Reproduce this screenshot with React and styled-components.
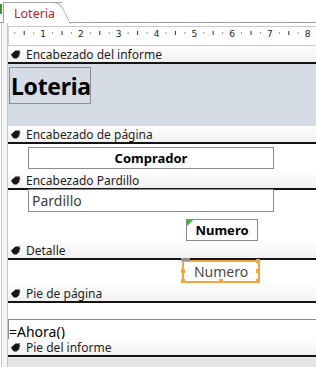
import styled, { createGlobalStyle } from "styled-components";

const GlobalStyle = createGlobalStyle`
  html, body { margin: 0; padding: 0; background: #ffffff; }
  body { font-family: "Noto Sans", "Open Sans", sans-serif; }
`;

const Page = styled.div`
  width: 316px;
  height: 367px;
  overflow: hidden;
  display: flex;
  flex-direction: column;
  background: #ffffff;
`;

const TabBar = styled.div`
  height: 22px;
  flex: none;
  display: flex;
  align-items: flex-end;
  border-bottom: 1px solid #9c9c9c;
  position: relative;
`;

const GreenStub = styled.div`
  width: 2px;
  height: 10px;
  margin-bottom: 8px;
  background: #3f9b3a;
  flex: none;
`;

const Tab = styled.div`
  position: relative;
  margin-left: 1px;
  height: 21px;
  margin-bottom: -1px;
  padding: 0 7px 0 10px;
  display: flex;
  align-items: center;
  font-size: 12.5px;
  color: #b8262d;
  background: #ffffff;
  border-left: 1px solid #a3a3a3;
  border-top: 1px solid #a3a3a3;
  box-sizing: border-box;
  z-index: 1;

  &::after {
    content: "";
    position: absolute;
    right: -9px;
    top: -1px;
    width: 14px;
    height: 21px;
    border-top: 1px solid #a3a3a3;
    border-right: 1px solid #a3a3a3;
    border-top-right-radius: 7px;
    background: #ffffff;
    transform: skewX(26deg);
    transform-origin: bottom left;
    z-index: -1;
  }
`;

const Workspace = styled.div`
  flex: 1;
  display: flex;
  min-height: 0;
`;

const Gutter = styled.div`
  flex: none;
  box-sizing: border-box;
  border-left: 1px solid #c9c9c9;
  border-right: 1px solid #c2c2c2;
  margin-left: 1px;
  width: 7px;
  background: #f4f4f4;
`;

const Designer = styled.div`
  flex: 1;
  display: flex;
  flex-direction: column;
  padding-top: 3px;
  min-width: 0;
`;

const RulerBox = styled.div`
  height: 20px;
  flex: none;
  box-sizing: border-box;
  border-top: 1px solid #c8c8c8;
  border-bottom: 1px solid #c8c8c8;
  border-left: 1px solid #d4d4d4;
`;

const Band = styled.div`
  height: 16px;
  flex: none;
  display: flex;
  align-items: center;
  gap: 5px;
  padding-left: 3px;
  font-size: 12px;
  color: #1e1e1e;
  background: linear-gradient(#fdfdfd, #f1f1f1);
  border-bottom: 2px solid #141414;
  white-space: nowrap;
`;

const Body = styled.div`
  position: relative;
  flex: none;
  height: ${(p) => p.$h}px;
  background: ${(p) => p.$bg || "#ffffff"};
`;

const Outside = styled.div`
  flex: 1;
  background: #e4e4e4;
  border-top: 1px solid #f0f0f0;
`;

const Control = styled.div`
  position: absolute;
  left: ${(p) => p.$x}px;
  top: ${(p) => p.$y}px;
  width: ${(p) => p.$w}px;
  height: ${(p) => p.$h}px;
  box-sizing: border-box;
  border: 1px solid #8c8c8c;
  background: #ffffff;
  display: flex;
  align-items: center;
  justify-content: ${(p) => (p.$center ? "center" : "flex-start")};
  padding-left: ${(p) => (p.$center ? 0 : p.$pad ?? 2)}px;
  font-size: ${(p) => p.$size || 13}px;
  font-weight: ${(p) => (p.$bold ? 700 : 400)};
  color: ${(p) => p.$color || "#000000"};
  white-space: nowrap;
  overflow: hidden;
`;

const TitleLabel = styled(Control)`
  background: transparent;
  letter-spacing: -0.3px;
`;

const ErrorMark = styled.span`
  position: absolute;
  left: 0;
  top: 0;
  width: 0;
  height: 0;
  border-top: 6px solid #1fc31f;
  border-right: 6px solid transparent;
`;

const Selected = styled(Control)`
  border: 2px solid #f7a43b;
  color: #4a4a4a;
  overflow: visible;
`;

const Handle = styled.span`
  position: absolute;
  left: ${(p) => p.$x}px;
  top: ${(p) => p.$y}px;
  width: 4px;
  height: 4px;
  background: #f7a43b;
`;

const MoveHandle = styled.span`
  position: absolute;
  left: -3px;
  top: -4px;
  width: 9px;
  height: 3px;
  background: #8e8e8e;
`;

const Clip = styled.div`
  position: absolute;
  inset: 0;
  overflow: hidden;
`;

function BandIcon() {
  return (
    <svg width="10" height="9" viewBox="0 0 10 9">
      <path
        d="M0 4.5 L4.5 0.5 L9.5 0.5 L8 2 L9.5 2 L8 3.5 L9.5 3.5 L7.5 5.5 L9 5.5 L5.5 8.5 L3 8.5 L1.5 7 Z"
        fill="#161616"
      />
    </svg>
  );
}

function Ruler() {
  const zero = -3.7;
  const step = 37.8;
  const marks = [];
  for (let i = 1; i < 36; i++) {
    const x = zero + (i * step) / 4;
    if (x > 308) break;
    if (i % 4 === 0) {
      marks.push(
        <text key={i} x={x} y={9.5} fontSize="9" textAnchor="middle" fill="#1a1a1a" fontFamily="DejaVu Sans, sans-serif">
          {i / 4}
        </text>
      );
    } else if (i % 2 === 0) {
      marks.push(<rect key={i} x={x - 0.5} y={4} width="1" height="4" fill="#333" />);
    } else {
      marks.push(<rect key={i} x={x - 0.5} y={5.5} width="1" height="1" fill="#333" />);
    }
  }
  return (
    <svg width="308" height="18" viewBox="0 0 308 18">
      {marks}
    </svg>
  );
}

function Section({ title, height, bg, children }) {
  return (
    <>
      <Band>
        <BandIcon />
        {title}
      </Band>
      <Body $h={height} $bg={bg}>
        {children}
      </Body>
    </>
  );
}

export default function App() {
  return (
    <>
      <GlobalStyle />
      <Page>
        <TabBar>
          <GreenStub />
          <Tab>Loteria</Tab>
        </TabBar>
        <Workspace>
          <Gutter />
          <Designer>
            <RulerBox>
              <Ruler />
            </RulerBox>
            <Section title="Encabezado del informe" height={62} bg="#d6dce6">
              <TitleLabel $x={1} $y={3} $w={82} $h={37} $size={23} $bold $pad={1}>
                Loteria
              </TitleLabel>
            </Section>
            <Section title="Encabezado de página" height={28}>
              <Control $x={20} $y={3} $w={246} $h={22} $bold $center>
                Comprador
              </Control>
            </Section>
            <Section title="Encabezado Pardillo" height={52}>
              <Control $x={20} $y={-1} $w={246} $h={23} $size={14} $color="#404040" $pad={3}>
                Pardillo
              </Control>
              <Control $x={178} $y={29} $w={72} $h={22} $bold $center>
                <ErrorMark />
                Numero
              </Control>
            </Section>
            <Section title="Detalle" height={25}>
              <Selected $x={174} $y={0} $w={78} $h={23} $size={14} $center>
                <MoveHandle />
                <Handle $x={-3} $y={7} />
                <Handle $x={72} $y={7} />
                <Handle $x={72} $y={-3} />
                <Handle $x={-3} $y={17} />
                <Handle $x={35} $y={17} />
                <Handle $x={72} $y={17} />
                Numero
              </Selected>
            </Section>
            <Section title="Pie de página" height={36}>
              <Clip>
                <Control $x={0} $y={16} $w={330} $h={24} $size={14} $pad={0}>
                  =Ahora()
                </Control>
              </Clip>
            </Section>
            <Section title="Pie del informe" height={0} />
            <Outside />
          </Designer>
        </Workspace>
      </Page>
    </>
  );
}
